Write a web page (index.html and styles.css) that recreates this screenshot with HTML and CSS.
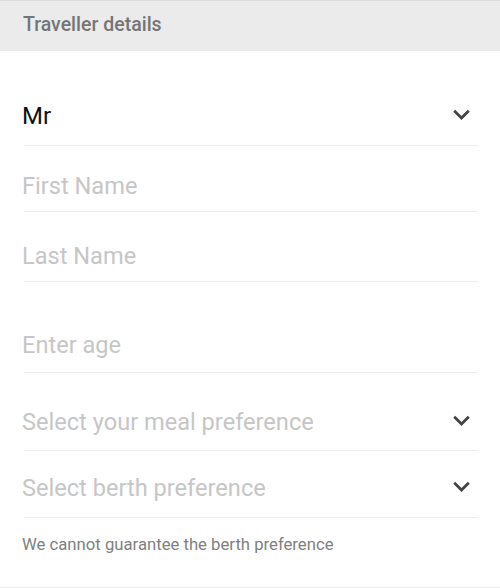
FILE: index.html
```html
<!DOCTYPE html>
<html>
<head>
    <title>Traveller details</title>
    <link rel="stylesheet" href="styles.css">
</head>
<body>
    <header class="section-title">Traveller details</header>

    <div class="traveller-form">
        <div class="field field-title">
            <span class="value">Mr</span>
            <svg class="chevron" viewBox="0 0 24 24"><path d="M16.59 8.59L12 13.17 7.41 8.59 6 10l6 6 6-6z"/></svg>
        </div>
        <div class="field field-first">
            <span class="placeholder">First Name</span>
        </div>
        <div class="field field-last">
            <span class="placeholder">Last Name</span>
        </div>
        <div class="field field-age">
            <span class="placeholder">Enter age</span>
        </div>
        <div class="field field-meal">
            <span class="placeholder">Select your meal preference</span>
            <svg class="chevron" viewBox="0 0 24 24"><path d="M16.59 8.59L12 13.17 7.41 8.59 6 10l6 6 6-6z"/></svg>
        </div>
        <div class="field field-berth">
            <span class="placeholder">Select berth preference</span>
            <svg class="chevron" viewBox="0 0 24 24"><path d="M16.59 8.59L12 13.17 7.41 8.59 6 10l6 6 6-6z"/></svg>
        </div>
        <p class="note">We cannot guarantee the berth preference</p>
    </div>

    <div class="section-end"></div>
</body>
</html>
```

FILE: styles.css
```css
body {
    font-family: Roboto, "Noto Sans", sans-serif;
    background-color: #fff;
    margin: 0;
    padding: 0;
}

.section-title {
    height: 51px;
    box-sizing: border-box;
    padding: 13px 23px 0;
    background-color: #ebebeb;
    border-top: 1px solid #dadada;
    color: #757575;
    font-size: 19.5px;
    font-weight: 500;
    line-height: 22px;
}

.traveller-form {
    padding: 0 22px 0 24px;
}

.field {
    display: flex;
    align-items: center;
    justify-content: space-between;
    height: 28px;
    border-bottom: 1px solid #ececec;
    font-size: 23.6px;
    line-height: 28px;
}

.field span {
    margin-left: -2px;
}

.value {
    color: #111;
    font-size: 24px;
}

.placeholder {
    color: #c6c6c6;
}

.chevron {
    width: 33px;
    height: 33px;
    margin-right: 0;
    margin-bottom: 4px;
    fill: #444;
}

/* spacing is uneven in the original form */
.field-title { padding: 51px 0 15px; }
.field-first { padding: 26px 0 11px; }
.field-last  { padding: 30px 0 11px; }
.field-age   { padding: 49px 0 13px; }
.field-meal  { padding: 35px 0 14px; }
.field-berth { padding: 23px 0 15px; }

.note {
    margin: 0 0 0 -2px;
    padding-top: 17px;
    height: 52px;
    color: #808080;
    font-size: 16.7px;
    line-height: 20px;
}

.section-end {
    border-top: 1px solid #ececec;
}
```
